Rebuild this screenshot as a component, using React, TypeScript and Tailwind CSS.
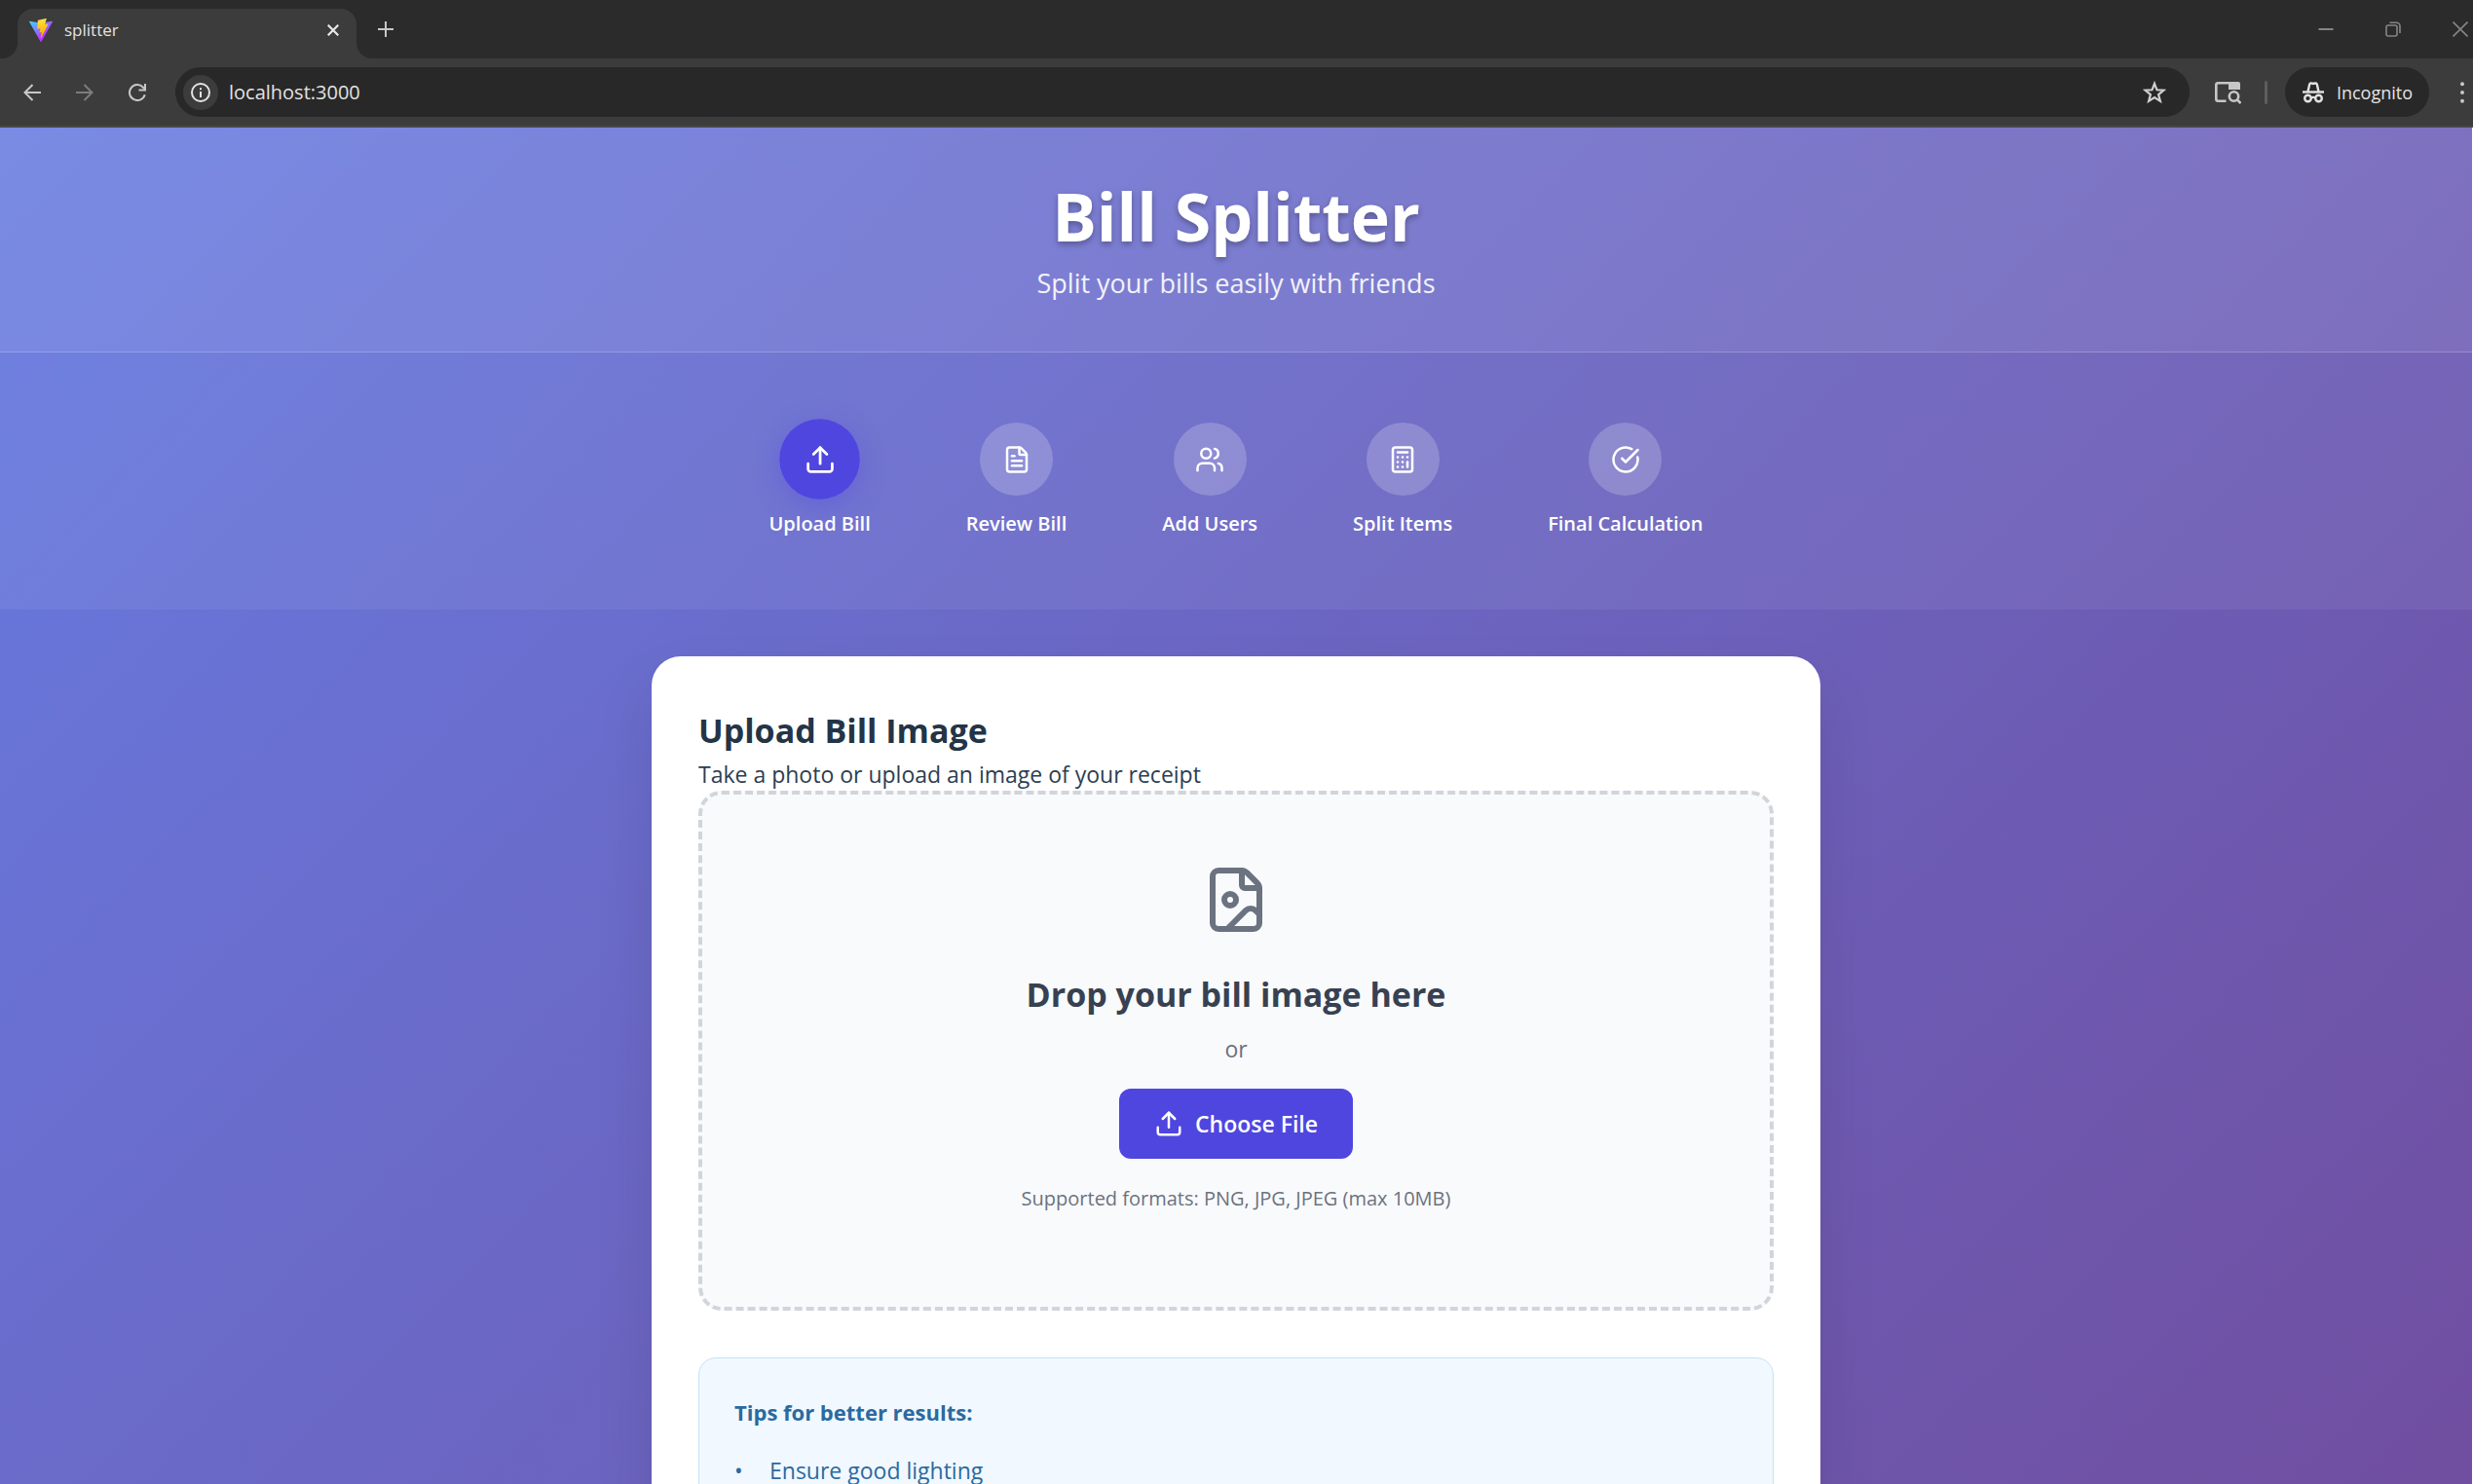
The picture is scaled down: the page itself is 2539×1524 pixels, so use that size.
import React from "react";
import {
  Calculator,
  CircleCheckBig,
  FileImage,
  FileText,
  Upload,
  Users,
  type LucideIcon,
} from "lucide-react";

type Step = { label: string; icon: LucideIcon; active?: boolean };

const steps: Step[] = [
  { label: "Upload Bill", icon: Upload, active: true },
  { label: "Review Bill", icon: FileText },
  { label: "Add Users", icon: Users },
  { label: "Split Items", icon: Calculator },
  { label: "Final Calculation", icon: CircleCheckBig },
];

const tips = ["Ensure good lighting"];

function ViteLogo() {
  return (
    <svg viewBox="0 0 256 257" className="size-6 shrink-0" aria-hidden="true">
      <defs>
        <linearGradient id="vite-a" x1="-.828%" x2="57.636%" y1="7.652%" y2="78.411%">
          <stop offset="0%" stopColor="#41D1FF" />
          <stop offset="100%" stopColor="#BD34FE" />
        </linearGradient>
        <linearGradient id="vite-b" x1="43.376%" x2="50.316%" y1="2.242%" y2="89.03%">
          <stop offset="0%" stopColor="#FFEA83" />
          <stop offset="8.333%" stopColor="#FFDD35" />
          <stop offset="100%" stopColor="#FFA800" />
        </linearGradient>
      </defs>
      <path
        fill="url(#vite-a)"
        d="M255.153 37.938L134.897 252.976c-2.483 4.44-8.862 4.466-11.382.048L.875 37.958c-2.746-4.814 1.371-10.646 6.827-9.67l120.385 21.517a6.537 6.537 0 0 0 2.322-.004l117.867-21.483c5.438-.991 9.574 4.796 6.877 9.62Z"
      />
      <path
        fill="url(#vite-b)"
        d="M185.432.063L96.44 17.501a3.268 3.268 0 0 0-2.634 3.014l-5.474 92.456a3.268 3.268 0 0 0 3.997 3.378l24.777-5.718c2.318-.535 4.413 1.507 3.936 3.838l-7.361 36.047c-.495 2.426 1.782 4.5 4.151 3.78l15.304-4.649c2.372-.72 4.652 1.36 4.15 3.788l-11.698 56.621c-.732 3.542 3.979 5.473 5.943 2.437l1.313-2.028l72.516-144.72c1.215-2.423-.88-5.186-3.54-4.672l-25.505 4.922c-2.396.462-4.435-1.77-3.759-4.114l16.646-57.705c.677-2.35-1.37-4.583-3.769-4.113Z"
      />
    </svg>
  );
}

function TabStrip() {
  return (
    <div className="flex h-15 shrink-0 items-end bg-[#2b2b2b] text-[#e3e3e3]">
      <div className="h-4 w-[18px] shrink-0 bg-[#3c3c3c]">
        <div className="size-full rounded-br-2xl bg-[#2b2b2b]" />
      </div>
      <div className="flex h-[51px] w-[348px] shrink-0 items-center rounded-t-2xl bg-[#3c3c3c] pr-3 pb-2 pl-3">
        <ViteLogo />
        <span className="ml-3 grow text-[17px] leading-6">splitter</span>
        <button aria-label="Close tab" className="flex size-6 items-center justify-center">
          <svg viewBox="0 0 12 12" className="size-3" stroke="#e8e8e8" strokeWidth="2.2">
            <path d="M0.7 0.7 11.3 11.3M11.3 0.7 0.7 11.3" />
          </svg>
        </button>
      </div>
      <div className="h-4 w-4 shrink-0 bg-[#3c3c3c]">
        <div className="size-full rounded-bl-2xl bg-[#2b2b2b]" />
      </div>
      <button aria-label="New tab" className="flex h-15 w-7 items-center justify-center">
        <svg viewBox="0 0 16 16" className="size-4" stroke="#c7c7c7" strokeWidth="2">
          <path d="M8 0v16M0 8h16" />
        </svg>
      </button>
      <div className="grow" />
      <div className="flex h-15 shrink-0 items-center gap-[53px] pr-[5px]">
        <button aria-label="Minimize">
          <svg viewBox="0 0 16 16" className="size-4" stroke="#858585" strokeWidth="2">
            <path d="M0.5 8h15" />
          </svg>
        </button>
        <button aria-label="Restore">
          <svg viewBox="0 0 16 16" className="size-4" fill="none" stroke="#858585" strokeWidth="1.6">
            <rect x="1" y="4" width="11" height="11" rx="2" />
            <path d="M4.5 1.2H11.5A3.5 3.5 0 0 1 15 4.7V12" />
          </svg>
        </button>
        <button aria-label="Close">
          <svg viewBox="0 0 16 16" className="size-4" stroke="#858585" strokeWidth="1.6">
            <path d="M0.5 0.5 15.5 15.5M15.5 0.5 0.5 15.5" />
          </svg>
        </button>
      </div>
    </div>
  );
}

function Toolbar() {
  return (
    <div className="flex h-[71px] shrink-0 items-center border-b-2 border-[#474747] bg-[#3c3c3c] pl-6 text-[#e3e3e3]">
      <button aria-label="Back">
        <svg viewBox="0 0 18 18" className="size-[18px]" fill="none" stroke="#c7c7c7" strokeWidth="2">
          <path d="M18 9H1.5M9.5 1 1.5 9l8 8" />
        </svg>
      </button>
      <button aria-label="Forward" className="ml-9">
        <svg viewBox="0 0 18 18" className="size-[18px]" fill="none" stroke="#7c7c7c" strokeWidth="2">
          <path d="M0 9h16.5M8.5 1l8 8-8 8" />
        </svg>
      </button>
      <button aria-label="Reload" className="ml-9">
        <svg viewBox="0 0 18 18" className="size-[18px]" fill="none" stroke="#c7c7c7" strokeWidth="2">
          <path d="M16.7 11.2A8 8 0 1 1 14.8 3.5L17 5.8" />
          <path d="M17 0v6.5H10.5" />
        </svg>
      </button>
      <div className="ml-[30px] flex h-[51px] grow items-center rounded-full bg-[#282828] pr-6 pl-2">
        <button
          aria-label="Site information"
          className="flex size-9 items-center justify-center rounded-full bg-[#3c3c3c]"
        >
          <svg viewBox="0 0 20 20" className="size-5" fill="none" stroke="#e3e3e3" strokeWidth="2">
            <circle cx="10" cy="10" r="9" />
            <path d="M10 9v6M10 5.2v2" />
          </svg>
        </button>
        <input
          aria-label="Address"
          defaultValue="localhost:3000"
          className="ml-[11px] min-w-0 grow bg-transparent text-[20px] leading-8 outline-none"
        />
        <button aria-label="Bookmark this tab">
          <svg viewBox="0 0 24 24" className="size-6" fill="none" stroke="#d0d0d0" strokeWidth="2.2">
            <path d="M12 2.8 14.5 9.3 21.5 9.7 16.1 14.1 17.9 20.9 12 17.1 6.1 20.9 7.9 14.1 2.5 9.7 9.5 9.3Z" />
          </svg>
        </button>
      </div>
      <button aria-label="Search this page" className="ml-[26px]">
        <svg viewBox="0 0 27 24" className="h-6 w-[27px]" fill="none" stroke="#c7c7c7" strokeWidth="2.6">
          <path d="M14 2.3H3.3a2 2 0 0 0-2 2V18.7a2 2 0 0 0 2 2H11.5" />
          <path d="M14 1h10a2 2 0 0 1 2 2v6H14z" fill="#c7c7c7" stroke="none" />
          <circle cx="19.5" cy="16" r="4.7" />
          <path d="M22.7 19.2 26.5 23" />
        </svg>
      </button>
      <div className="ml-6 h-6 w-[3px] rounded-full bg-[#5e5e5e]" />
      <div className="ml-[18px] flex h-[51px] items-center rounded-full bg-[#282828] px-[17px]">
        <svg viewBox="0 0 24 24" className="size-6" fill="none" stroke="#e3e3e3" strokeWidth="2.4">
          <path d="M1 11.5h22" />
          <path d="M6.5 11 8.2 3.5C8.5 2.5 9 2.2 10 2.4L12 3l2-.6c1-.2 1.5.1 1.8 1.1L17.5 11" />
          <circle cx="6.5" cy="18" r="3.3" />
          <circle cx="17.5" cy="18" r="3.3" />
          <path d="M9.8 17.5q2.2-1.2 4.4 0" />
        </svg>
        <span className="ml-3 text-[18px] leading-6">Incognito</span>
      </div>
      <button aria-label="Menu" className="mr-[9px] ml-8">
        <svg viewBox="0 0 4 22" className="h-[22px] w-1" fill="#c7c7c7">
          <circle cx="2" cy="2.2" r="2" />
          <circle cx="2" cy="11" r="2" />
          <circle cx="2" cy="19.8" r="2" />
        </svg>
      </button>
    </div>
  );
}

function StepButton({ label, icon: Icon, active }: Step) {
  return (
    <button className="flex flex-col items-center gap-3 py-6 text-white">
      <span
        className={
          active
            ? "flex size-[75px] scale-110 items-center justify-center rounded-full bg-[#4f46e0] shadow-[0_6px_24px_rgba(79,70,229,0.4)]"
            : "flex size-[75px] items-center justify-center rounded-full bg-white/20"
        }
      >
        <Icon size={30} />
      </span>
      <span className="text-[20px] leading-[34px] font-semibold whitespace-nowrap">{label}</span>
    </button>
  );
}

export default function App() {
  return (
    <div className="flex h-screen flex-col overflow-hidden font-['Open_Sans','Noto_Sans',sans-serif]">
      <TabStrip />
      <Toolbar />
      <div className="min-h-0 grow overflow-hidden border-r border-white bg-linear-135/srgb from-[#677be1] to-[#704ea0]">
        <header className="border-b border-white/20 bg-white/12 py-12 text-center text-white">
          <h1 className="text-[68px] leading-[86px] font-bold [text-shadow:0_3px_6px_rgba(0,0,0,0.3)]">
            Bill Splitter
          </h1>
          <p className="mt-1 text-[27px] leading-11 text-white/90">
            Split your bills easily with friends
          </p>
        </header>
        <nav className="flex justify-center gap-[98px] bg-white/6 pt-12 pb-[47px]">
          {steps.map((step) => (
            <StepButton key={step.label} {...step} />
          ))}
        </nav>
        <main className="mx-auto mt-12 max-w-[1200px] rounded-[30px] bg-white p-12 pb-24 shadow-[0_30px_60px_rgba(0,0,0,0.1)]">
          <h2 className="text-[34px] leading-[56px] font-bold text-[#243447]">Upload Bill Image</h2>
          <p className="text-[23px] leading-[34px] text-[#2c3e50]">
            Take a photo or upload an image of your receipt
          </p>
          <section className="flex flex-col items-center rounded-3xl border-4 border-dashed border-[#d1d5db] bg-[#f9fafc] pt-18 pb-[94px] text-[#6b7280]">
            <FileImage size={72} />
            <h3 className="mt-9 text-[34px] leading-[50px] font-bold text-[#374151]">
              Drop your bill image here
            </h3>
            <p className="mt-3 text-[23px] leading-[38px]">or</p>
            <button className="mt-[22px] flex h-18 items-center gap-3 rounded-xl bg-[#4f46e0] px-9 text-[23px] font-semibold text-white">
              <Upload size={30} />
              Choose File
            </button>
            <p className="mt-6 text-[20px] leading-[34px]">
              Supported formats: PNG, JPG, JPEG (max 10MB)
            </p>
          </section>
          <section className="mt-12 rounded-[18px] border border-[#c3e3f5] bg-[#f1f8ff] p-9 text-[#2b6a9e]">
            <h4 className="text-[22px] leading-[38px] font-bold">Tips for better results:</h4>
            <ul className="mt-[22px] text-[23px] leading-[38px]">
              {tips.map((tip) => (
                <li key={tip} className="flex">
                  <span className="w-9">•</span>
                  {tip}
                </li>
              ))}
            </ul>
          </section>
        </main>
      </div>
    </div>
  );
}
